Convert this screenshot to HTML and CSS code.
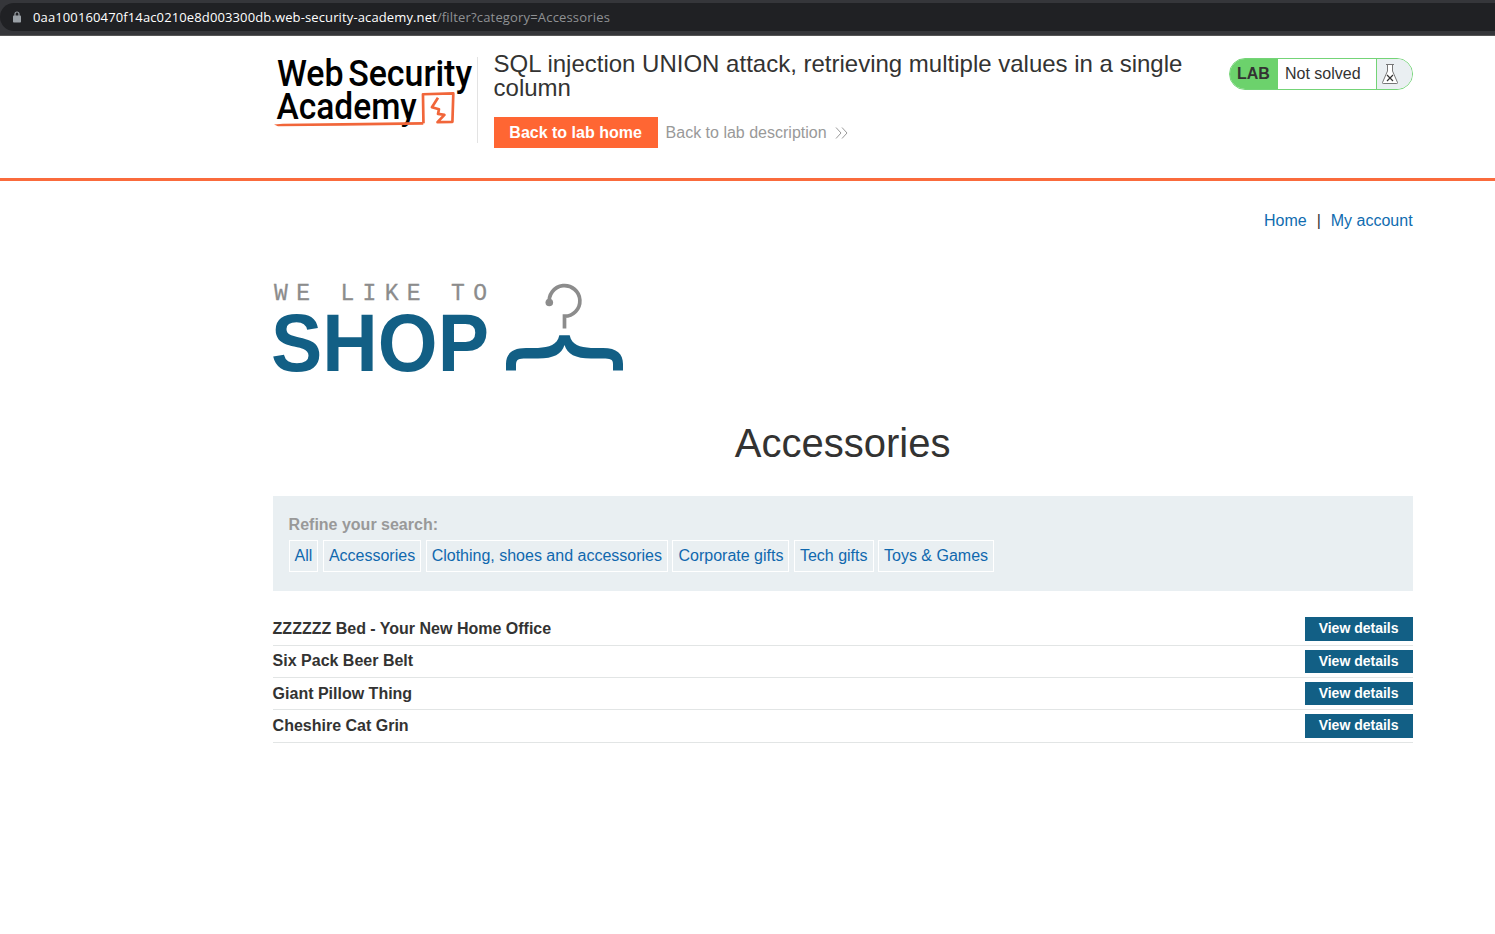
FILE: index.html
```html
<!DOCTYPE html>
<html lang="en">
<head>
<meta charset="utf-8">
<title>SQL injection UNION attack, retrieving multiple values in a single column</title>
<link rel="stylesheet" href="styles.css">
</head>
<body>
<div class="browser-bar">
  <div class="address">
    <svg class="lock" width="8" height="12" viewBox="0 0 8 12"><path d="M2 5V3a2 2 0 0 1 4 0v2" fill="none" stroke="#9aa0a6" stroke-width="1.2"/><rect y="4.5" width="8" height="7" rx=".8" fill="#9aa0a6"/></svg>
    <span class="url"><span class="host">0aa100160470f14ac0210e8d003300db.web-security-academy.net</span>/filter?category=Accessories</span>
  </div>
</div>
<header class="lab-header">
  <div class="container header-row">
    <svg class="academy-logo" width="205" height="86" viewBox="0 0 205 86">
      <g class="logo-text">
        <text x="4" y="29.3" textLength="67" lengthAdjust="spacingAndGlyphs">Web</text>
        <text x="75.500" y="29.3" textLength="124.500" lengthAdjust="spacingAndGlyphs">Security</text>
        <text x="3.500" y="62" textLength="141" lengthAdjust="spacingAndGlyphs">Academy</text>
      </g>
      <path class="swash" d="M1 67.500L10 66.800L151 65V67.800L70 69L5 69.500Z"/>
      <path class="frame" d="M151.200 66.500L150.700 37.200L181.200 36.400L180.300 64.900L165.300 65.300L172.300 58L165.800 57L166.800 52.300L159.700 50.300L165.800 40.700"/>
    </svg>
    <div class="title">
      <h2>SQL injection UNION attack, retrieving multiple values in a single column</h2>
      <div class="actions">
        <a class="lab-home">Back to lab home</a>
        <a class="description">Back to lab description<svg width="13" height="12" viewBox="0 0 13 12"><path d="M1 .5L6 6L1 11.500M7 .5L12 6L7 11.500" fill="none" stroke="#999" stroke-width="1"/></svg></a>
      </div>
    </div>
    <div class="status">
      <span class="lab">LAB</span>
      <span class="state">Not solved</span>
      <span class="flask"><svg width="18" height="22" viewBox="0 0 18 22"><path d="M6.500 1.500V8L1.500 19.500Q1.300 20.500 2.200 20.500H15.800Q16.700 20.500 16.500 19.500L11.500 8V1.500Z" fill="#fff"/><path d="M5 1.500H13M6.500 1.500V8L1.500 19.500Q1.300 20.500 2.200 20.500H15.800Q16.700 20.500 16.500 19.500L11.500 8V1.500" fill="none" stroke="#777"/><path d="M6 12L12 18M12 12L6 18" stroke="#333" stroke-width="1.200"/></svg></span>
    </div>
  </div>
</header>
<main class="container">
  <nav class="links"><a>Home</a><span>|</span><a>My account</a></nav>
  <svg class="shop-logo" width="352" height="92" viewBox="0 0 352 92">
    <text class="like" x="1" y="17.500" textLength="213">WE LIKE TO</text>
    <text class="shop" x="-2" y="89" textLength="218" lengthAdjust="spacingAndGlyphs">SHOP</text>
    <path d="M276.500 21.500A15.300 15.300 0 1 1 291.500 34.200V46.500" fill="none" stroke="#8c8c8c" stroke-width="3.700"/>
    <circle cx="276.300" cy="20.500" r="3.800" fill="#8c8c8c"/>
    <path fill="#125f85" d="M286.300 53.300H296.700C298.500 63 307 65.300 318 66H330C344 66 350 72 350 82V88.500H340V82C340 77 337 76.500 330 76.500H318C302 76.500 294.500 72 291.500 63C288.500 72 281 76.500 265 76.500H253C246 76.500 243 77 243 83V88.500H233V82C233 72 239 66 253 66H265C276 65.300 284.500 63 286.300 53.300Z"/>
  </svg>
  <h1>Accessories</h1>
  <section class="filters">
    <label>Refine your search:</label>
    <div class="tags"><a>All</a><a>Accessories</a><a>Clothing, shoes and accessories</a><a>Corporate gifts</a><a>Tech gifts</a><a>Toys &amp; Games</a></div>
  </section>
  <section class="products">
    <div class="product"><span>ZZZZZZ Bed - Your New Home Office</span><a>View details</a></div>
    <div class="product"><span>Six Pack Beer Belt</span><a>View details</a></div>
    <div class="product"><span>Giant Pillow Thing</span><a>View details</a></div>
    <div class="product"><span>Cheshire Cat Grin</span><a>View details</a></div>
  </section>
</main>
</body>
</html>
```
FILE: styles.css
```css
* { box-sizing: border-box; }
body { margin: 0; background: #fff; color: #333332; font: 16px/20px "Liberation Sans", Arial, sans-serif; overflow: hidden; }
.browser-bar { height: 36px; padding: 3px 0 5px; background: #35363a; border-bottom: 1px solid #555; }
.address { height: 28px; display: flex; align-items: center; padding-left: 13px; background: #202124; border-radius: 14px 0 0 14px; }
.lock { margin-right: 12px; }
.url { font: 13px/20px "Open Sans", "Noto Sans", sans-serif; letter-spacing: 0.17px; color: #8f9194; white-space: nowrap; }
.host { color: #fff; letter-spacing: 0.125px; }
.container { width: 1140px; margin-left: 272.6px; }
.lab-header { height: 145px; border-bottom: 3px solid #fa6b3c; }
.header-row { display: flex; align-items: flex-start; }
.academy-logo { flex: none; margin-top: 21px; border-right: 1px solid #e3e3e3; }
.logo-text { font: 500 37.5px/1 Roboto, sans-serif; fill: #000; }
.swash { fill: #f1663a; }
.frame { fill: none; stroke: #f1663a; stroke-width: 2.7; stroke-linejoin: round; }
.title { width: 710px; margin-left: 16px; padding-top: 16px; }
.title h2 { margin: 0; font-size: 24px; line-height: 24px; font-weight: 400; }
.actions { display: flex; align-items: center; margin-top: 17px; }
.lab-home { width: 164px; height: 31px; line-height: 31px; text-align: center; color: #fff; background: #ff6633; font-weight: 700; }
.description { display: flex; align-items: center; gap: 8px; margin-left: 8px; color: #999; }
.status { display: flex; width: 184px; height: 32px; margin: 22px 0 0 auto; border: 1px solid #74d477; border-radius: 16px; overflow: hidden; line-height: 30px; }
.lab { width: 48px; padding-left: 7.4px; background: #6cd26c; font-weight: 700; }
.state { width: 99px; padding-left: 7.4px; border-right: 1px solid #74d477; }
.flask { flex: 1; display: flex; align-items: center; padding-left: 4px; background: #eaeff2; }
.links { display: flex; justify-content: flex-end; gap: 10px; padding-top: 30px; }
.links a { color: #0f6cb0; }
.shop-logo { display: block; margin-top: 51px; overflow: visible; }
.like { font: 23px/1 "Liberation Mono", monospace; fill: #8c8c8c; stroke: #8c8c8c; stroke-width: 0.3; }
.shop { font: 700 81px/1 "Liberation Sans", sans-serif; fill: #125f85; }
h1 { margin: 45px 0 0; font-size: 40px; line-height: 48px; font-weight: 400; text-align: center; }
.filters { height: 95px; margin-top: 29px; padding: 19px 16px; background: #e9eff2; }
.filters label { display: block; color: #999; font-weight: 700; }
.tags { display: flex; gap: 4.5px; margin-top: 5px; }
.tags a { padding: 5px; height: 32px; border: 1px solid #fff; color: #1068ae; white-space: nowrap; }
.products { margin-top: 22.4px; }
.product { display: flex; align-items: center; justify-content: space-between; height: 32.3px; border-bottom: 1px solid #e2e5e5; font-weight: 700; }
.product a { width: 108px; height: 23.6px; line-height: 23.6px; text-align: center; background: #125f85; color: #fff; font-size: 14px; }
```
